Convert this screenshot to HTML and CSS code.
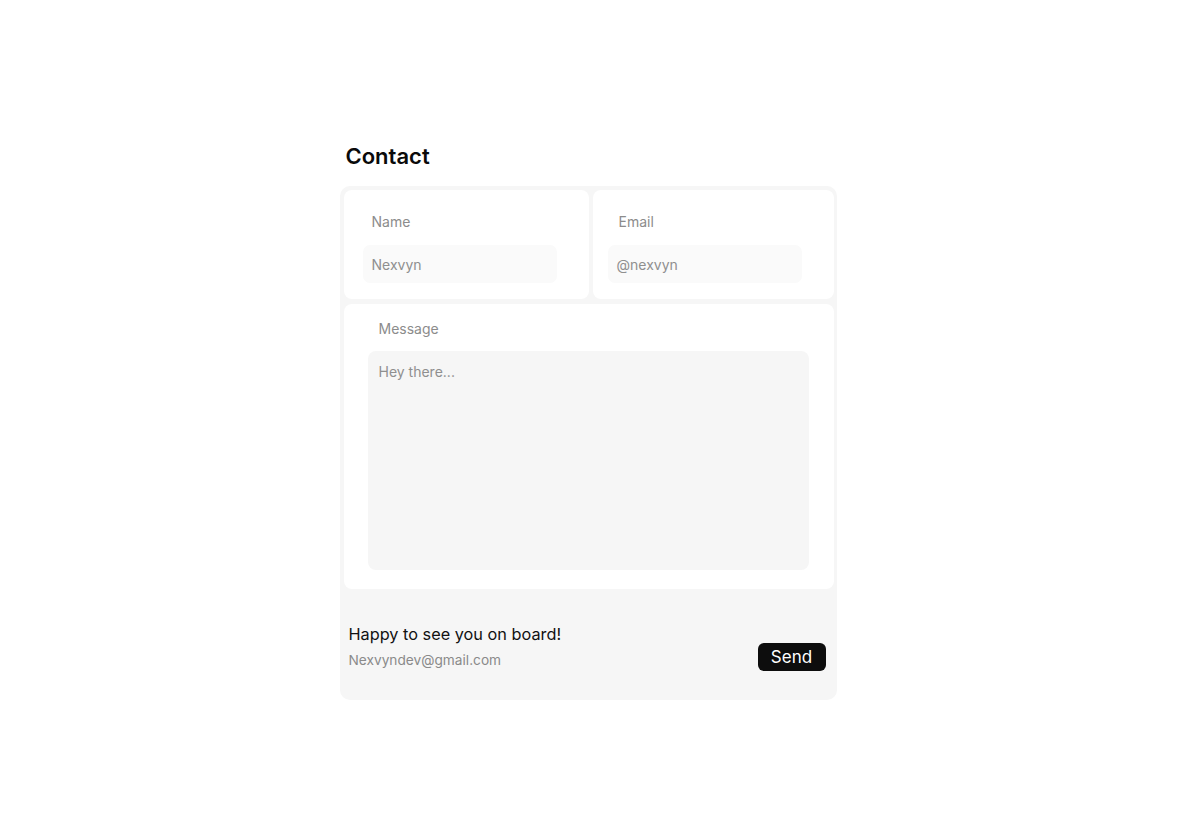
FILE: index.html
```html
<!DOCTYPE html>
<html lang="en">
<head>
<meta charset="utf-8">
<title>Contact</title>
<link rel="stylesheet" href="styles.css">
</head>
<body>
<main class="wrap">
  <h1 class="title">Contact</h1>
  <form class="card">
    <div class="row">
      <div class="field field-name">
        <label class="label">Name</label>
        <div class="input"><span class="ph">Nexvyn</span></div>
      </div>
      <div class="field field-email">
        <label class="label">Email</label>
        <div class="input"><span class="ph">@nexvyn</span></div>
      </div>
    </div>
    <div class="field field-msg">
      <label class="label">Message</label>
      <div class="textarea"><span class="ph">Hey there...</span></div>
    </div>
    <div class="footer">
      <div class="footer-text">
        <p class="hello">Happy to see you on board!</p>
        <p class="mail">Nexvyndev@gmail.com</p>
      </div>
      <button type="button" class="send">Send</button>
    </div>
  </form>
</main>
</body>
</html>
```

FILE: styles.css
```css
* { box-sizing: border-box; }
html, body { margin: 0; padding: 0; background: #fff; }
body { font-family: Inter, "Noto Sans", sans-serif; color: #111; }

.wrap {
  width: 497px;
  margin: 0 auto;
  padding-top: 138px;
  position: relative;
  left: -12px;
}
.title {
  margin: 2px 0 14px 6px;
  font-size: 22px;
  line-height: 32px;
  font-weight: 600;
  color: #0a0a0a;
}
.card {
  background: #f6f6f6;
  border-radius: 10px;
  padding: 4px 3px 0 4px;
  height: 514px;
  display: flex;
  flex-direction: column;
  gap: 5px;
}
.row {
  display: flex;
  gap: 4px;
}
.field {
  background: #fff;
  border-radius: 8px;
}
.field-name, .field-email {
  flex: 1;
  height: 109px;
  padding-top: 23px;
}
.field-name { padding-left: 19px; }
.field-email { padding-left: 15px; }
.label {
  display: block;
  font-size: 14px;
  line-height: 18px;
  color: #8c8c8c;
}
.field-name .label { margin-left: 9px; }
.field-email .label { margin-left: 11px; }
.input {
  margin-top: 14px;
  width: 194px;
  height: 38px;
  background: #fafafa;
  border-radius: 7px;
  padding-left: 9px;
  display: flex;
  align-items: center;
}
.ph {
  font-size: 14px;
  color: #8f8f8f;
}
.field-msg {
  height: 285px;
  padding: 16px 25px 0 24px;
}
.field-msg .label { margin-left: 11px; }
.textarea {
  margin-top: 13px;
  height: 219px;
  background: #f6f6f6;
  border-radius: 8px;
  padding: 10px 11px;
}
.textarea .ph { line-height: 16px; }
.footer {
  flex: 1;
  display: flex;
  align-items: flex-start;
  justify-content: space-between;
  padding: 29px 8px 0 5px;
}
.footer-text p { margin: 0; }
.hello {
  font-size: 16.3px;
  line-height: 22px;
  color: #111;
}
.mail {
  margin-top: 6px !important;
  font-size: 13.7px;
  line-height: 18px;
  color: #8a8a8a;
}
.send {
  margin-top: 20px;
  width: 68px;
  height: 28px;
  border: none;
  border-radius: 6px;
  background: #0d0d0d;
  color: #fff;
  font-family: Inter, "Noto Sans", sans-serif;
  font-size: 17px;
  font-weight: 400;
  padding: 0;
  line-height: 28px;
}
```
